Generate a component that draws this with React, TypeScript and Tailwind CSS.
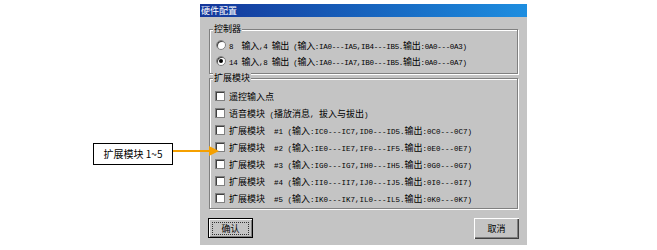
import React from 'react'

const cjkRe = /[\u3000-\u9fff\uff00-\uffef]/

// split text so Chinese runs use the CJK font and ASCII runs the narrow mono font
function Mixed({ text }: { text: string }) {
    const parts = text.match(/[\u3000-\u9fff\uff00-\uffef]+|[^\u3000-\u9fff\uff00-\uffef]+/g) ?? []
    return (
        <span className="whitespace-pre">
            {parts.map((p, i) =>
                cjkRe.test(p) ? (
                    <span key={i} className="text-[9px] font-['Noto_Sans_CJK_SC',sans-serif]">{p}</span>
                ) : (
                    <span key={i} className="text-[7.5px] font-['Liberation_Mono',monospace]">{p}</span>
                )
            )}
        </span>
    )
}

function Radio({ checked, label }: { checked?: boolean; label: string }) {
    return (
        <div className="flex h-[16px] items-center">
            <span className="ml-[6px] flex h-[10px] w-[10px] items-center justify-center rounded-full border border-[#808080] bg-white shadow-[inset_1px_1px_0_#404040]">
                {checked && <span className="h-[4px] w-[4px] rounded-full bg-black" />}
            </span>
            <span className="ml-[3px] leading-[10px] tracking-[-0.3px] text-black">
                <Mixed text={label} />
            </span>
        </div>
    )
}

function Check({ label }: { label: string }) {
    return (
        <div className="flex h-[17px] items-center">
            <span className="ml-[5px] h-[10px] w-[10px] border border-[#808080] bg-white shadow-[inset_1px_1px_0_#404040]" />
            <span className="ml-[4px] leading-[10px] text-black">
                <Mixed text={label} />
            </span>
        </div>
    )
}

const modules = [
    { n: 1, a: 'C', b: 'D' },
    { n: 2, a: 'E', b: 'F' },
    { n: 3, a: 'G', b: 'H' },
    { n: 4, a: 'I', b: 'J' },
    { n: 5, a: 'K', b: 'L' },
]

export default function App() {
    return (
        <div className="relative h-[250px] w-[657px] overflow-hidden bg-white">
            <div className="ml-[200px] mt-[4px] flex h-[241px] w-[327px] flex-col bg-[#c4c4c4]">
                {/* title bar */}
                <div className="flex h-[13px] items-center bg-gradient-to-r from-[#15369a] to-[#1e8ee0] pl-[1px]">
                    <span className="text-[9px] leading-[10px] text-white font-['Noto_Sans_CJK_SC',sans-serif]">硬件配置</span>
                </div>

                <div className="mx-[9px] mt-[7px] flex flex-col">
                    <fieldset className="border border-[#808080] pb-[4px] pt-[3px] shadow-[inset_1px_1px_0_#fff,1px_1px_0_#fff]">
                        <legend className="ml-[3px] bg-[#c4c4c4] px-[1px] text-[9px] leading-[10px] text-black font-['Noto_Sans_CJK_SC',sans-serif]">
                            控制器
                        </legend>
                        <Radio label="8  输入,4 输出 (输入:IA0---IA5,IB4---IB5.输出:0A0---0A3)" />
                        <Radio checked label="14 输入,8 输出 (输入:IA0---IA7,IB0---IB5.输出:0A0---0A7)" />
                    </fieldset>

                    <fieldset className="mt-[-1px] border border-[#808080] pb-[2px] pt-[4px] shadow-[inset_1px_1px_0_#fff,1px_1px_0_#fff]">
                        <legend className="ml-[3px] bg-[#c4c4c4] px-[1px] text-[9px] leading-[10px] text-black font-['Noto_Sans_CJK_SC',sans-serif]">
                            扩展模块
                        </legend>
                        <Check label="遥控输入点" />
                        <Check label="语音模块 (播放消息, 拔入与拔出)" />
                        {modules.map((m) => (
                            <Check
                                key={m.n}
                                label={`扩展模块  #${m.n} (输入:I${m.a}0---I${m.a}7,I${m.b}0---I${m.b}5.输出:0${m.a}0---0${m.a}7)`}
                            />
                        ))}
                    </fieldset>
                </div>

                <div className="mt-[9px] flex justify-between px-[8px]">
                    <button className="flex h-[20px] w-[45px] items-center justify-center border border-black bg-[#c4c4c4] shadow-[inset_1px_1px_0_#fff,inset_-1px_-1px_0_#808080]">
                        <span className="border border-dotted border-[#333] px-[8px] text-[9px] leading-[11px] text-black font-['Noto_Sans_CJK_SC',sans-serif]">确认</span>
                    </button>
                    <button className="flex h-[21px] w-[45px] items-center justify-center bg-[#c4c4c4] shadow-[inset_1px_1px_0_#fff,inset_-1px_-1px_0_#404040,inset_-2px_-2px_0_#808080]">
                        <span className="text-[9px] leading-[11px] text-black font-['Noto_Sans_CJK_SC',sans-serif]">取消</span>
                    </button>
                </div>
            </div>

            {/* annotation callout */}
            <div className="absolute left-[93px] top-[143px] flex h-[22px] w-[80px] items-center justify-center border border-black bg-white">
                <span className="text-[10px] leading-[10px] text-black font-['Noto_Sans_CJK_SC',sans-serif]">扩展模块 1~5</span>
            </div>
            <svg className="absolute left-[173px] top-[145px]" width="48" height="12" viewBox="0 0 48 12">
                <line x1="0" y1="6" x2="38" y2="6" stroke="#f5a000" strokeWidth="2" />
                <polygon points="36,1 46,6 36,11" fill="#f5a000" />
            </svg>
        </div>
    )
}
